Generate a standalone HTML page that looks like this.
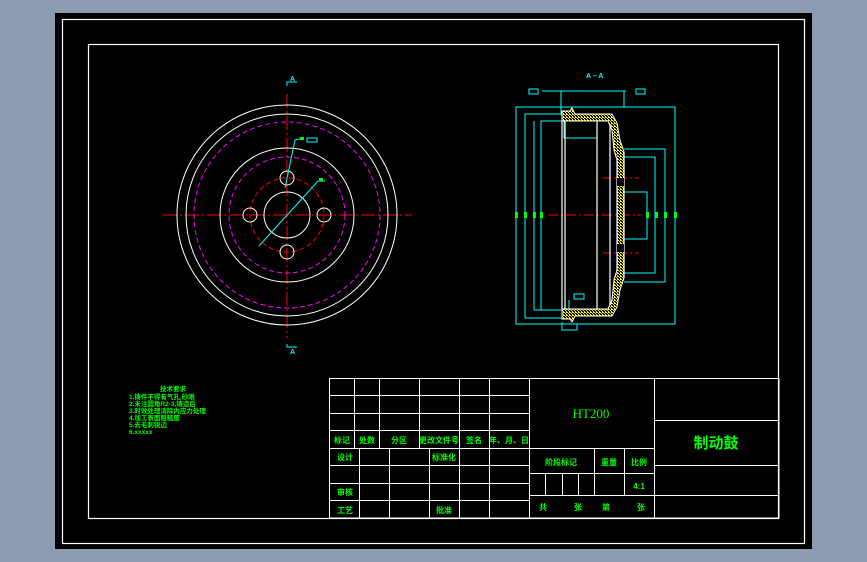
<!DOCTYPE html>
<html><head><meta charset="utf-8"><style>
html,body{margin:0;padding:0;background:#8b9bb0;}
svg{display:block}
text{font-family:"Liberation Sans","Noto Sans CJK SC",sans-serif;fill:#00ff00;font-weight:bold}
</style></head><body>
<svg width="867" height="562" viewBox="0 0 867 562" xmlns="http://www.w3.org/2000/svg">
<defs>
<pattern id="h" width="3" height="3" patternUnits="userSpaceOnUse">
<rect width="3" height="3" fill="#000"/>
<rect width="1" height="1" fill="#ffff00"/><rect x="2" y="2" width="1" height="1" fill="#ffff00"/><rect x="1" y="1" width="1" height="1" fill="#ffff00"/><rect x="2" y="0" width="1" height="1" fill="#ffff00"/>
</pattern>
</defs>
<rect x="55" y="13" width="757" height="536" fill="#000"/>
<rect x="62.5" y="19.5" width="742" height="524" fill="none" stroke="#fff" stroke-width="1.2"/>
<rect x="88.5" y="44.5" width="690" height="474" fill="none" stroke="#fff" stroke-width="1.2"/>

<!-- front view -->
<g fill="none" stroke-width="1">
<line x1="163" y1="215" x2="412" y2="215" stroke="#f00" stroke-dasharray="14,3,2,3"/>
<line x1="287" y1="94" x2="287" y2="338" stroke="#f00" stroke-dasharray="14,3,2,3"/>
<circle cx="287" cy="215" r="110" stroke="#fff"/>
<circle cx="287" cy="215" r="101" stroke="#fff"/>
<circle cx="287" cy="215" r="93" stroke="#f0f" stroke-dasharray="5,3"/>
<circle cx="287" cy="215" r="67" stroke="#fff"/>
<circle cx="287" cy="215" r="58" stroke="#f0f" stroke-dasharray="5,3"/>
<circle cx="287" cy="215" r="37" stroke="#f00" stroke-dasharray="5,3"/>
<circle cx="287" cy="215" r="23" stroke="#fff"/>
<circle cx="287" cy="178" r="7" stroke="#fff"/>
<circle cx="287" cy="252" r="7" stroke="#fff"/>
<circle cx="250" cy="215" r="7" stroke="#fff"/>
<circle cx="324" cy="215" r="7" stroke="#fff"/>
<polyline points="259,246 318,181 325,181" stroke="#0ff"/>
<polyline points="285,188 295,140 298,139 303,139" stroke="#0ff"/>
<rect x="307" y="138" width="10" height="4" stroke="#0ff"/>
<polyline points="287,86 287,82 297,82" stroke="#0ff"/>
<polyline points="287,344 287,347 297,347" stroke="#0ff"/>
</g>
<rect x="300" y="137" width="4" height="3" fill="#0f0"/><rect x="319" y="178" width="4" height="3" fill="#0f0"/>
<text x="290" y="81" font-size="7" style="fill:#0ff">A</text>
<text x="290" y="354" font-size="7" style="fill:#0ff">A</text>

<!-- section view -->
<g fill="none" stroke="#0ff" stroke-width="1">
<polyline points="541,310 541,121 562,121"/>
<polyline points="534,310 534,121"/>
<polyline points="525,318 525,114 562,114"/>
<rect x="516" y="107" width="159" height="217"/>
<polyline points="525,318 562,318"/>
<polyline points="534,310 562,310"/>
<polyline points="624,149 665,149 665,282 624,282"/>
<polyline points="624,157 655,157 655,273 624,273"/>
<polyline points="624,192 647,192 647,239 624,239"/>
<line x1="542" y1="91" x2="626" y2="91"/>
<line x1="561" y1="91" x2="561" y2="115"/><line x1="624" y1="91" x2="624" y2="107"/>
<rect x="529" y="89" width="9" height="5"/><rect x="636" y="89" width="9" height="5"/>
<polyline points="564,121 564,138 597,138 597,121"/>
<rect x="574" y="294" width="10" height="5"/>
<polyline points="569,300 569,310"/>
<polyline points="562,322 562,330 577,330 577,324"/>
</g>
<line x1="548" y1="215" x2="641" y2="215" stroke="#f00" stroke-dasharray="10,3,2,3"/>
<line x1="603" y1="178" x2="639" y2="178" stroke="#f00" stroke-dasharray="8,3,2,3"/>
<line x1="603" y1="253" x2="639" y2="253" stroke="#f00" stroke-dasharray="8,3,2,3"/>
<path d="M562,111 L570,111 L572,108 L575,114 L612,114 L617,123 L620,140 L624,152 L624,278 L620,290 L617,307 L612,316 L575,316 L572,322 L570,319 L562,319 L562,309 L608,309 L612,300 L614,280 L617,270 L617,160 L614,150 L612,130 L608,121 L562,121 Z" fill="url(#h)" stroke="#fff" stroke-width="1"/>
<g stroke="#fff" stroke-width="1.2" fill="none">
<line x1="562" y1="121" x2="562" y2="309"/><line x1="565" y1="121" x2="565" y2="309"/>
<line x1="597" y1="122" x2="597" y2="309"/><line x1="610" y1="125" x2="610" y2="305"/>
<line x1="617" y1="160" x2="617" y2="270"/><line x1="624" y1="152" x2="624" y2="278"/>
</g>
<rect x="617" y="178" width="7" height="8" fill="#000"/><rect x="617" y="244" width="7" height="8" fill="#000"/>
<g fill="#0f0"><rect x="515" y="212" width="3" height="6"/><rect x="524" y="212" width="3" height="6"/><rect x="533" y="212" width="3" height="6"/><rect x="540" y="212" width="3" height="6"/><rect x="646" y="212" width="3" height="6"/><rect x="655" y="212" width="3" height="6"/><rect x="664" y="212" width="3" height="6"/><rect x="674" y="212" width="3" height="6"/></g>
<text x="586" y="78" font-size="7" style="fill:#0ff">A – A</text>

<!-- notes -->
<g font-size="6.5">
<text x="160" y="391">技术要求</text>
<text x="129" y="399">1.铸件不得有气孔,砂眼</text>
<text x="129" y="406">2.未注圆角R2-3,铸造后</text>
<text x="129" y="413">3.时效处理消除内应力处理</text>
<text x="129" y="420">4.加工表面粗糙度</text>
<text x="129" y="427">5.去毛刺锐边</text>
<text x="129" y="434">6.xxxxx</text>
</g>

<!-- title block -->
<g stroke="#fff" stroke-width="1" fill="none">
<rect x="329.5" y="378.5" width="449.5" height="139.5"/>
<line x1="329" y1="395.5" x2="529" y2="395.5"/><line x1="329" y1="413.5" x2="529" y2="413.5"/><line x1="329" y1="430.5" x2="529" y2="430.5"/><line x1="329" y1="448.5" x2="654" y2="448.5"/>
<line x1="329" y1="465.5" x2="529" y2="465.5"/><line x1="329" y1="483.5" x2="529" y2="483.5"/><line x1="329" y1="500.5" x2="529" y2="500.5"/>
<line x1="354.5" y1="378" x2="354.5" y2="448"/><line x1="379.5" y1="378" x2="379.5" y2="448"/><line x1="419.5" y1="378" x2="419.5" y2="448"/><line x1="459.5" y1="378" x2="459.5" y2="518"/><line x1="489.5" y1="378" x2="489.5" y2="518"/><line x1="529.5" y1="378" x2="529.5" y2="518"/>
<line x1="359.5" y1="448" x2="359.5" y2="518"/><line x1="389.5" y1="448" x2="389.5" y2="518"/><line x1="429.5" y1="448" x2="429.5" y2="518"/>
<line x1="654.5" y1="378" x2="654.5" y2="518"/>
<line x1="529" y1="473.5" x2="654" y2="473.5"/><line x1="529" y1="495.5" x2="654" y2="495.5"/>
<line x1="594.5" y1="448" x2="594.5" y2="495"/><line x1="624.5" y1="448" x2="624.5" y2="495"/>
<line x1="545.5" y1="473" x2="545.5" y2="495"/><line x1="562.5" y1="473" x2="562.5" y2="495"/><line x1="578.5" y1="473" x2="578.5" y2="495"/>
<line x1="654" y1="420.5" x2="779" y2="420.5"/><line x1="654" y1="465.5" x2="779" y2="465.5"/><line x1="654" y1="495.5" x2="779" y2="495.5"/>
</g>
<g font-size="8" text-anchor="middle">
<text x="342" y="443">标记</text><text x="367" y="443">处数</text><text x="399" y="443">分区</text><text x="439" y="443">更改文件号</text><text x="474" y="443">签名</text><text x="509" y="443">年、月、日</text>
<text x="345" y="460">设计</text><text x="444" y="460">标准化</text>
<text x="345" y="495">审核</text><text x="345" y="513">工艺</text><text x="444" y="513">批准</text>
<text x="561" y="465">阶段标记</text><text x="609" y="465">重量</text><text x="639" y="465">比例</text>
<text x="639" y="489">4:1</text>
<text x="543" y="510">共</text><text x="578" y="510">张</text><text x="606" y="510">第</text><text x="641" y="510">张</text>
<text x="591" y="418" font-size="13" style="font-family:'Liberation Serif',serif;font-weight:normal">HT200</text>
<text x="716" y="448" font-size="15">制动鼓</text>
</g>
</svg>
</body></html>
